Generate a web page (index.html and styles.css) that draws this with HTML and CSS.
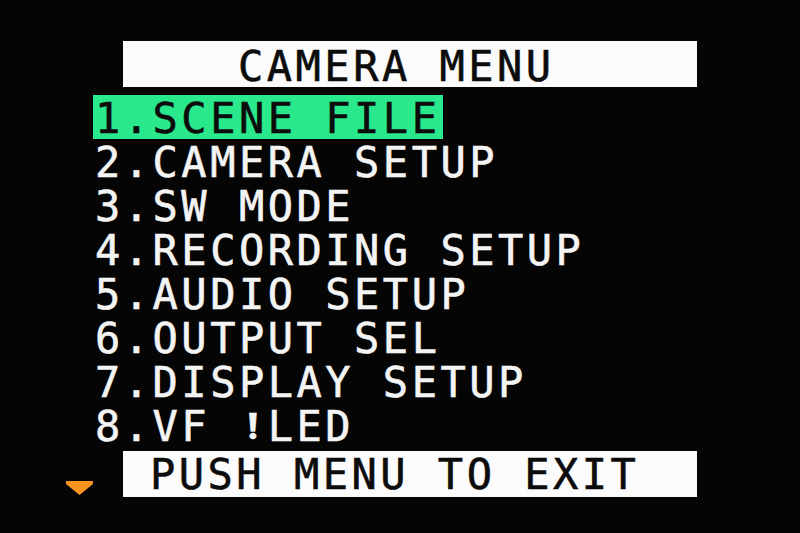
FILE: index.html
```html
<!DOCTYPE html>
<html lang="en">
<head>
<meta charset="utf-8">
<title>Camera Menu</title>
<link rel="stylesheet" href="styles.css">
</head>
<body>
<div class="screen">
  <div class="title-bar">CAMERA MENU</div>
  <ul class="menu">
    <li class="row"><span class="selected">1.SCENE FILE</span></li>
    <li class="row">2.CAMERA SETUP</li>
    <li class="row">3.SW MODE</li>
    <li class="row">4.RECORDING SETUP</li>
    <li class="row">5.AUDIO SETUP</li>
    <li class="row">6.OUTPUT SEL</li>
    <li class="row">7.DISPLAY SETUP</li>
    <li class="row">8.VF <span class="lamp">&#x2757;&#xFE0E;</span>LED</li>
  </ul>
  <div class="footer">
    <svg class="arrow" width="27" height="14" viewBox="0 0 27 14" aria-hidden="true">
      <polygon points="0,0 27,0 27,3 13.5,14 0,3" fill="#f7931e"/>
    </svg>
    <div class="exit-bar">PUSH MENU TO EXIT</div>
  </div>
</div>
</body>
</html>
```

FILE: styles.css
```css
html, body {
  margin: 0;
  padding: 0;
  background: #050505;
}

body {
  width: 800px;
  height: 533px;
  overflow: hidden;
}

.screen {
  display: flex;
  flex-direction: column;
  padding-top: 41px;
  font-family: "DejaVu Sans Mono", "Liberation Mono", monospace;
  font-size: 42px;
  letter-spacing: 3.5px;
  white-space: pre;
  -webkit-text-stroke: 0.6px currentColor;
}

.title-bar {
  margin-left: 123px;
  width: 574px;
  height: 46px;
  line-height: 40px;
  padding: 6px 0 0 115px;
  box-sizing: border-box;
  background: #fbfbfb;
  color: #0c0c0c;
}

.menu {
  list-style: none;
  margin: 8px 0 0 0;
  padding: 0 0 0 93px;
  display: flex;
  flex-direction: column;
}

.row {
  height: 44px;
  line-height: 40px;
  padding: 4px 0 0 2px;
  box-sizing: border-box;
  color: #f4f4f4;
}

.selected {
  display: inline-block;
  height: 44px;
  margin: -4px 0 0 -2px;
  padding: 4px 3px 0 2px;
  box-sizing: border-box;
  background: #2ae98c;
  color: #0c0c0c;
  vertical-align: top;
}

.lamp {
  display: inline-block;
  width: 28.8px;
  text-align: center;
  letter-spacing: 0;
  font-family: "DejaVu Sans", sans-serif;
  font-size: 36px;
  vertical-align: top;
}

.footer {
  display: flex;
  align-items: flex-end;
  gap: 30px;
  margin-top: 4px;
  padding-left: 66px;
}

.arrow {
  display: block;
  margin-bottom: 2px;
}

.exit-bar {
  width: 574px;
  height: 46px;
  line-height: 40px;
  padding: 4px 0 0 27px;
  box-sizing: border-box;
  background: #fbfbfb;
  color: #0c0c0c;
}
```
